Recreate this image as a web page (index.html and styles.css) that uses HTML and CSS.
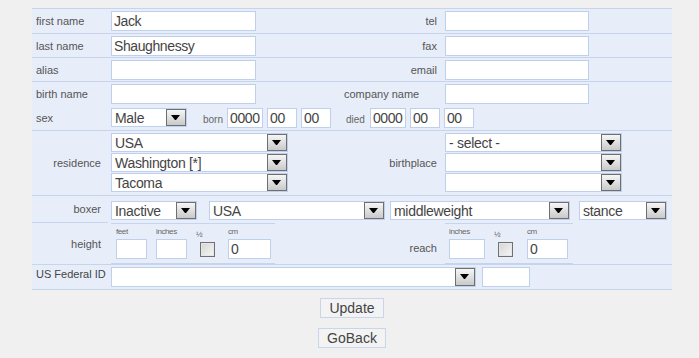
FILE: index.html
```html
<html>
    <head>
        <title>Edit Boxer</title>
        <link rel="stylesheet" href="styles.css">
    </head>
    <body>

        <table class="person">
            <colgroup>
                <col class="c1"><col class="c2"><col class="c3"><col class="c4">
            </colgroup>

            <!-- names / contact -->
            <tr class="r1">
                <td class="lbl">first name</td>
                <td><input type="text" class="txt w145" value="Jack"></td>
                <td class="lbl rt3">tel</td>
                <td><input type="text" class="txt w144"></td>
            </tr>
            <tr class="r2">
                <td class="lbl">last name</td>
                <td><input type="text" class="txt w145" value="Shaughnessy"></td>
                <td class="lbl rt3">fax</td>
                <td><input type="text" class="txt w144"></td>
            </tr>
            <tr class="r2">
                <td class="lbl">alias</td>
                <td><input type="text" class="txt w145"></td>
                <td class="lbl rt3">email</td>
                <td><input type="text" class="txt w144"></td>
            </tr>
            <tr class="r2">
                <td class="lbl">birth name</td>
                <td><input type="text" class="txt w145"></td>
                <td class="lbl">company name</td>
                <td><input type="text" class="txt w144"></td>
            </tr>

            <!-- sex / dates -->
            <tr class="r5">
                <td class="lbl nb">sex</td>
                <td class="nb" colspan="3">
                    <div class="line">
                        <span class="sel w76"><select><option>Male</option><option>Female</option></select></span>
                        <span class="small born">born</span>
                        <input type="text" class="txt w36" value="0000">
                        <input type="text" class="txt w30 gap4" value="00">
                        <input type="text" class="txt w30 gap4" value="00">
                        <span class="small died">died</span>
                        <input type="text" class="txt w36" value="0000">
                        <input type="text" class="txt w30 gap4" value="00">
                        <input type="text" class="txt w30 gap4" value="00">
                    </div>
                </td>
            </tr>

            <!-- places -->
            <tr class="r6">
                <td class="lbl rt1">residence</td>
                <td>
                    <span class="sel w177 stack"><select><option>USA</option></select></span>
                    <span class="sel w177 stack"><select><option>Washington [*]</option></select></span>
                    <span class="sel w177 stack"><select><option>Tacoma</option></select></span>
                </td>
                <td class="lbl rt3">birthplace</td>
                <td>
                    <span class="sel w177 stack"><select><option>- select -</option></select></span>
                    <span class="sel w177 stack"><select><option></option></select></span>
                    <span class="sel w177 stack"><select><option></option></select></span>
                </td>
            </tr>

            <!-- boxer -->
            <tr class="r7">
                <td class="lbl rt1">boxer</td>
                <td colspan="3">
                    <div class="line down">
                        <span class="sel w86"><select><option>Inactive</option><option>Active</option></select></span>
                        <span class="sel w176 ml12"><select><option>USA</option></select></span>
                        <span class="sel w180 ml5"><select><option>middleweight</option></select></span>
                        <span class="sel w88 ml9"><select><option>stance</option></select></span>
                    </div>
                </td>
            </tr>

            <!-- height / reach -->
            <tr class="r8">
                <td class="lbl rt1">height</td>
                <td class="nb">
                    <div class="meas wh">
                        <div class="col ml5"><span class="tiny">feet</span><input type="text" class="txt w31"></div>
                        <div class="col ml9"><span class="tiny">inches</span><input type="text" class="txt w31"></div>
                        <div class="col ml9"><span class="tiny">½</span><input type="checkbox" class="chk"></div>
                        <div class="col ml13"><span class="tiny">cm</span><input type="text" class="txt w43" value="0"></div>
                    </div>
                </td>
                <td class="lbl rt3 nb low">reach</td>
                <td class="nb">
                    <div class="meas wr">
                        <div class="col ml4"><span class="tiny">inches</span><input type="text" class="txt w36"></div>
                        <div class="col ml9"><span class="tiny">½</span><input type="checkbox" class="chk"></div>
                        <div class="col ml14"><span class="tiny">cm</span><input type="text" class="txt w41" value="0"></div>
                    </div>
                </td>
            </tr>

            <!-- federal id -->
            <tr class="r9">
                <td class="lbl fed">US Federal ID</td>
                <td colspan="3">
                    <div class="line">
                        <span class="sel w365 tall"><select><option></option></select></span>
                        <input type="text" class="txt w48 ml6">
                    </div>
                </td>
            </tr>
        </table>

        <div class="actions">
            <button class="upd">Update</button>
            <button class="back">GoBack</button>
        </div>

    </body>
</html>
```

FILE: styles.css
```css
/* page */
body {
    margin: 8px;
    background-color: #f0f0f0;
    font-family: "Liberation Sans", Arial, sans-serif;
}

.person {
    table-layout: fixed;
    width: 640px;
    margin-left: 24px;
    border-collapse: collapse;
    background-color: #e8eef9;
    border-bottom: 1px solid #c6d4ec;
}

.c1 { width: 76px; }
.c2 { width: 232px; }
.c3 { width: 102px; }
.c4 { width: 230px; }

.person td {
    border-top: 1px solid #c6d4ec;
    padding: 0 3px;
    font-size: 11px;
    color: #555;
    vertical-align: middle;
}

.person td.nb {
    border-top: none;
}

.person td.lbl {
    padding-left: 4px;
    white-space: nowrap;
}

.person td.rt1 {
    text-align: right;
    padding-right: 7px;
}

.person td.rt3 {
    text-align: right;
    padding-right: 5px;
}

.person td.low {
    padding-top: 10px;
}

.person td.fed {
    color: #444;
    vertical-align: top;
    padding-top: 3px;
}

.r1 td { height: 25px; }
.r2 td { height: 24px; }
.r5 td { height: 25px; }
.r6 td { height: 65px; }
.r7 td { height: 27px; }
.r8 td { height: 42px; }
.r9 td { height: 25px; }

/* inputs */
.txt {
    box-sizing: border-box;
    height: 20px;
    margin: 0;
    padding: 0 2px;
    border: 1px solid #bfd0ec;
    background-color: #fff;
    font-family: "Liberation Sans", Arial, sans-serif;
    font-size: 14px;
    letter-spacing: -0.4px;
    color: #444;
    vertical-align: middle;
}

.w30 { width: 30px; }
.w31 { width: 31px; }
.w36 { width: 36px; }
.w41 { width: 41px; }
.w43 { width: 43px; }
.w48 { width: 48px; }
.w76 { width: 76px; }
.w86 { width: 86px; }
.w88 { width: 88px; }
.w144 { width: 144px; }
.w145 { width: 145px; }
.w176 { width: 176px; }
.w177 { width: 177px; }
.w180 { width: 180px; }
.w365 { width: 365px; }

.gap4 { margin-left: 4px; }
.ml4 { margin-left: 4px; }
.ml5 { margin-left: 5px; }
.ml6 { margin-left: 6px; }
.ml9 { margin-left: 9px; }
.ml12 { margin-left: 12px; }
.ml13 { margin-left: 13px; }
.ml14 { margin-left: 14px; }

/* fake windows selects */
.sel {
    position: relative;
    display: inline-block;
    box-sizing: border-box;
    height: 19px;
    border: 1px solid #bfd0ec;
    background-color: #fff;
    vertical-align: middle;
}

.sel.tall {
    height: 20px;
}

.sel.stack {
    display: block;
    margin-bottom: 1px;
}

.sel select {
    appearance: none;
    -webkit-appearance: none;
    display: block;
    width: 100%;
    height: 100%;
    margin: 0;
    padding: 0 0 0 3px;
    border: 0;
    outline: none;
    background: transparent;
    font-family: "Liberation Sans", Arial, sans-serif;
    font-size: 14px;
    letter-spacing: -0.3px;
    color: #444;
}

.sel::before {
    content: "";
    position: absolute;
    top: 0;
    right: 0;
    bottom: 0;
    width: 18px;
    border: 1px solid #6f6f6f;
    background: linear-gradient(#f6f6f6, #c9c9c9);
    pointer-events: none;
}

.sel::after {
    content: "";
    position: absolute;
    top: 50%;
    right: 6px;
    margin-top: -3px;
    width: 1px;
    height: 0;
    border-left: 4px solid transparent;
    border-right: 4px solid transparent;
    border-top: 5px solid #000;
    pointer-events: none;
}

/* rows with several controls */
.line {
    display: flex;
    align-items: center;
}

.line.down {
    padding-top: 3px;
}

.small {
    font-size: 10px;
    color: #666;
    padding-top: 3px;
}

.born {
    margin-left: 16px;
    margin-right: 4px;
}

.died {
    margin-left: 15px;
    margin-right: 5px;
}

/* height and reach */
.meas {
    display: flex;
    align-items: flex-end;
    box-sizing: border-box;
    border-top: 1px solid #c6d4ec;
    border-bottom: 1px solid #c6d4ec;
    padding: 3px 0 4px;
}

.wh { width: 164px; }
.wr { width: 128px; }

.col {
    display: flex;
    flex-direction: column;
}

.tiny {
    font-size: 8px;
    line-height: 10px;
    letter-spacing: -0.4px;
    color: #666;
    margin-bottom: 2px;
}

.chk {
    appearance: none;
    -webkit-appearance: none;
    box-sizing: border-box;
    width: 15px;
    height: 15px;
    margin: 0 0 2px 4px;
    border: 1px solid #707070;
    background: linear-gradient(135deg, #d4d4d4, #f7f7f7);
    box-shadow: inset 0 0 0 1px #e6e6e6;
}

/* buttons */
.actions {
    width: 640px;
    margin-left: 24px;
    padding-top: 8px;
    display: flex;
    flex-direction: column;
    align-items: center;
    gap: 10px;
}

.actions button {
    box-sizing: border-box;
    height: 20px;
    padding: 0;
    border: 1px solid #c9d5ea;
    background-color: #f3f3f3;
    font-family: "Liberation Sans", Arial, sans-serif;
    font-size: 14px;
    color: #444;
}

.upd { width: 64px; }
.back { width: 68px; }
```
